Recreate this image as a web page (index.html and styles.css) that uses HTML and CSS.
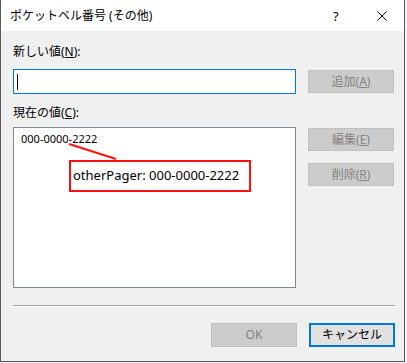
FILE: index.html
```html
<!DOCTYPE html>
<html lang="ja">
<head>
  <meta charset="UTF-8" />
  <title>ポケットベル番号 (その他)</title>
  <link rel="stylesheet" href="styles.css">
</head>
<body>

  <div class="dialog">
    <div class="titlebar">
      <span class="title">ポケットベル番号 (その他)</span>
      <span class="help">?</span>
      <span class="close">
        <svg width="10" height="10" viewBox="0 0 10 10"><path d="M0.5 0.5 L9.5 9.5 M9.5 0.5 L0.5 9.5" stroke="#000" stroke-width="1" fill="none"/></svg>
      </span>
    </div>

    <div class="content">
      <div class="label">新しい値(<u>N</u>):</div>
      <div class="row">
        <div class="input"><span class="caret"></span></div>
        <div class="side">
          <button class="btn disabled">追加(<u>A</u>)</button>
        </div>
      </div>

      <div class="label label-current">現在の値(<u>C</u>):</div>
      <div class="row">
        <div class="listbox">
          <div class="item">000-0000-2222</div>
          <!-- annotation -->
          <svg class="pointer" width="60" height="20" viewBox="0 0 60 20"><path d="M1 1 L48 16" stroke="#ff1010" stroke-width="2" fill="none"/></svg>
          <div class="callout">otherPager: 000-0000-2222</div>
        </div>
        <div class="side">
          <button class="btn disabled">編集(<u>E</u>)</button>
          <button class="btn disabled">削除(<u>R</u>)</button>
        </div>
      </div>

      <div class="separator"></div>

      <div class="footer">
        <button class="btn disabled">OK</button>
        <button class="btn default">キャンセル</button>
      </div>
    </div>
  </div>

</body>
</html>
```

FILE: styles.css
```css
* {
  box-sizing: border-box;
}

body {
  margin: 0;
  background-color: #f4f4f4;
  font-family: "Noto Sans", "Noto Sans CJK JP", sans-serif;
  font-size: 12px;
  color: #000;
}

.dialog {
  width: 405px;
  height: 362px;
  border: 1px solid #5b5b5b;
  border-top: none;
  background-color: #f0f0f0;
  display: flex;
  flex-direction: column;
}

.titlebar {
  height: 31px;
  background-color: #fff;
  display: flex;
  align-items: center;
  padding-left: 9px;
}

.title {
  flex: 1;
  line-height: 16px;
}

.help {
  width: 14px;
  margin-right: 30px;
  font-size: 13px;
}

.close {
  display: flex;
  margin-right: 17px;
}

.content {
  padding: 13px 10px 0 12px;
}

.label {
  line-height: 16px;
  height: 16px;
}

.label-current {
  margin-top: 11px;
}

.row {
  display: flex;
  gap: 12px;
  margin-top: 9px;
}

.label-current + .row {
  margin-top: 6px;
}

.input {
  width: 283px;
  height: 25px;
  background-color: #fff;
  border: 1px solid #0078d7;
  padding: 4px 0 0 3px;
}

.caret {
  display: block;
  width: 1px;
  height: 16px;
  background-color: #000;
}

.side {
  display: flex;
  flex-direction: column;
  gap: 12px;
  padding-top: 1px;
}

.btn {
  width: 86px;
  height: 23px;
  padding: 0;
  font-family: inherit;
  font-size: 12px;
  line-height: 16px;
  border: 1px solid #adadad;
  background-color: #e1e1e1;
  color: #000;
}

.btn.disabled {
  background-color: #cccccc;
  border-color: #bfbfbf;
  color: #838383;
}

.btn.default {
  border: 2px solid #0078d7;
}

.listbox {
  position: relative;
  width: 285px;
  height: 161px;
  background-color: #fff;
  border: 1px solid #828790;
  padding: 4px 0 0 7px;
}

.item {
  font-size: 11px;
  line-height: 14px;
}

.pointer {
  position: absolute;
  left: 54px;
  top: 15px;
}

.callout {
  position: absolute;
  left: 55px;
  top: 32px;
  width: 182px;
  height: 32px;
  border: 2px solid #ff1010;
  background-color: #fff;
  font-size: 13px;
  line-height: 26px;
  padding-left: 2px;
}

.separator {
  margin-top: 17px;
  width: 382px;
  height: 2px;
  border-top: 1px solid #a0a0a0;
  border-bottom: 1px solid #fff;
}

.footer {
  display: flex;
  justify-content: flex-end;
  gap: 12px;
  width: 382px;
  margin-top: 16px;
}

.footer .btn {
  height: 24px;
}
```
